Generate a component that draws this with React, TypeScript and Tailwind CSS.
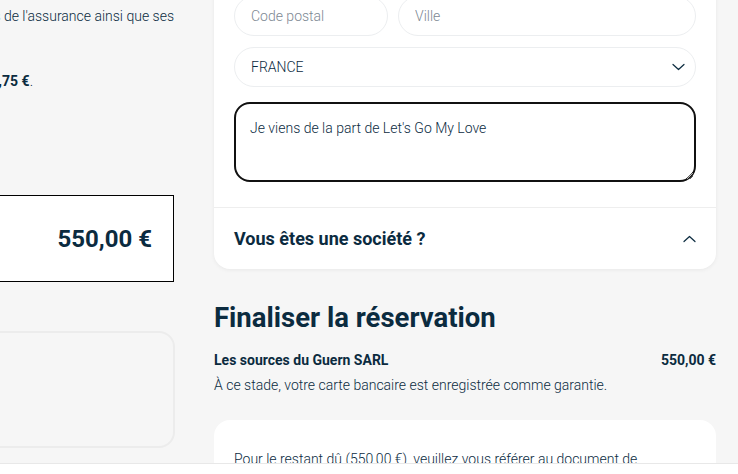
import React from "react"

const Chevron = ({ up = false }: { up?: boolean }) => (
  <svg width="13" height="8" viewBox="0 0 13 8" fill="none" className={up ? "rotate-180" : ""}>
    <path d="M1 1.5l5.5 5 5.5-5" stroke="#0b2b3f" strokeWidth="1.2" strokeLinecap="round" strokeLinejoin="round" />
  </svg>
)

const App = () => {
  return (
    <div className="relative min-h-screen overflow-hidden bg-[#f6f6f6] font-['Roboto',sans-serif] text-[#0b2b3f]">
      <div className="flex gap-[40px]">
        {/* left column, mostly scrolled off to the left */}
        <div className="w-[174px] shrink-0">
          <div className="mt-[6px] flex justify-end whitespace-nowrap text-[14px] leading-[20px] font-light">
            <span>Vous reconnaissez avoir pris connaissance des conditions générales de l'assurance ainsi que ses</span>
          </div>
          <div className="mt-[45px] flex w-[33px] justify-end whitespace-nowrap text-[14px] leading-[20px] font-light">
            <span>Montant de l'assurance : <b className="font-bold">12,75 €</b>.</span>
          </div>
          <div className="mt-[104px] -ml-[30px] flex h-[87px] items-center justify-end border border-black bg-white pr-[21px]">
            <span className="text-[24px] font-bold">550,00 €</span>
          </div>
          <div className="mt-[49px] -ml-[30px] h-[117px] w-[205px] rounded-[16px] border-2 border-[#ececec]"></div>
        </div>

        {/* right column */}
        <div className="w-[502px] shrink-0">
          <div className="-mt-[24px] rounded-[16px] bg-white shadow-[0_1px_4px_rgba(0,0,0,0.06)]">
            <div className="px-[20px] pt-[20px] pb-[25px]">
              <div className="flex gap-[10px]">
                <input
                  placeholder="Code postal"
                  className="h-[40px] w-[154px] rounded-full border border-[#eceef0] px-[16px] text-[14px] font-light outline-none placeholder:text-[#7d8893]"
                />
                <input
                  placeholder="Ville"
                  className="h-[40px] flex-1 rounded-full border border-[#eceef0] px-[16px] text-[14px] font-light outline-none placeholder:text-[#7d8893]"
                />
              </div>
              <div className="mt-[11px] flex h-[40px] items-center justify-between rounded-full border border-[#eceef0] pl-[16px] pr-[10px] text-[14px] font-light">
                <span>FRANCE</span>
                <Chevron />
              </div>
              <textarea
                defaultValue="Je viens de la part de Let's Go My Love"
                className="mt-[15px] block h-[80px] w-full rounded-[16px] border-2 border-[#111] px-[14px] pt-[15px] text-[14px] leading-[18px] font-light outline-none"
              />
            </div>
            <div className="flex h-[62px] items-center justify-between border-t border-[#eeeeee] pl-[20px] pr-[20px]">
              <span className="text-[18px] font-bold">Vous êtes une société ?</span>
              <Chevron up />
            </div>
          </div>

          <h2 className="mt-[32px] text-[27.5px] leading-[34px] font-bold">Finaliser la réservation</h2>
          <div className="mt-[15px] flex justify-between text-[14px] leading-[20px] font-bold">
            <span>Les sources du Guern SARL</span>
            <span>550,00 €</span>
          </div>
          <p className="mt-[5px] text-[14px] leading-[20px] font-light">
            À ce stade, votre carte bancaire est enregistrée comme garantie.
          </p>
          <div className="mt-[25px] h-[120px] rounded-[16px] bg-white px-[20px] pt-[29px] text-[14px] leading-[20px] font-light">
            Pour le restant dû (550,00 €), veuillez vous référer au document de confirmation qui vous sera envoyé par e-mail.
          </div>
        </div>
      </div>

      <div className="fixed inset-x-0 bottom-0 h-[11px] border-t border-[#e8e8e8] bg-white"></div>
    </div>
  )
}

export default App
